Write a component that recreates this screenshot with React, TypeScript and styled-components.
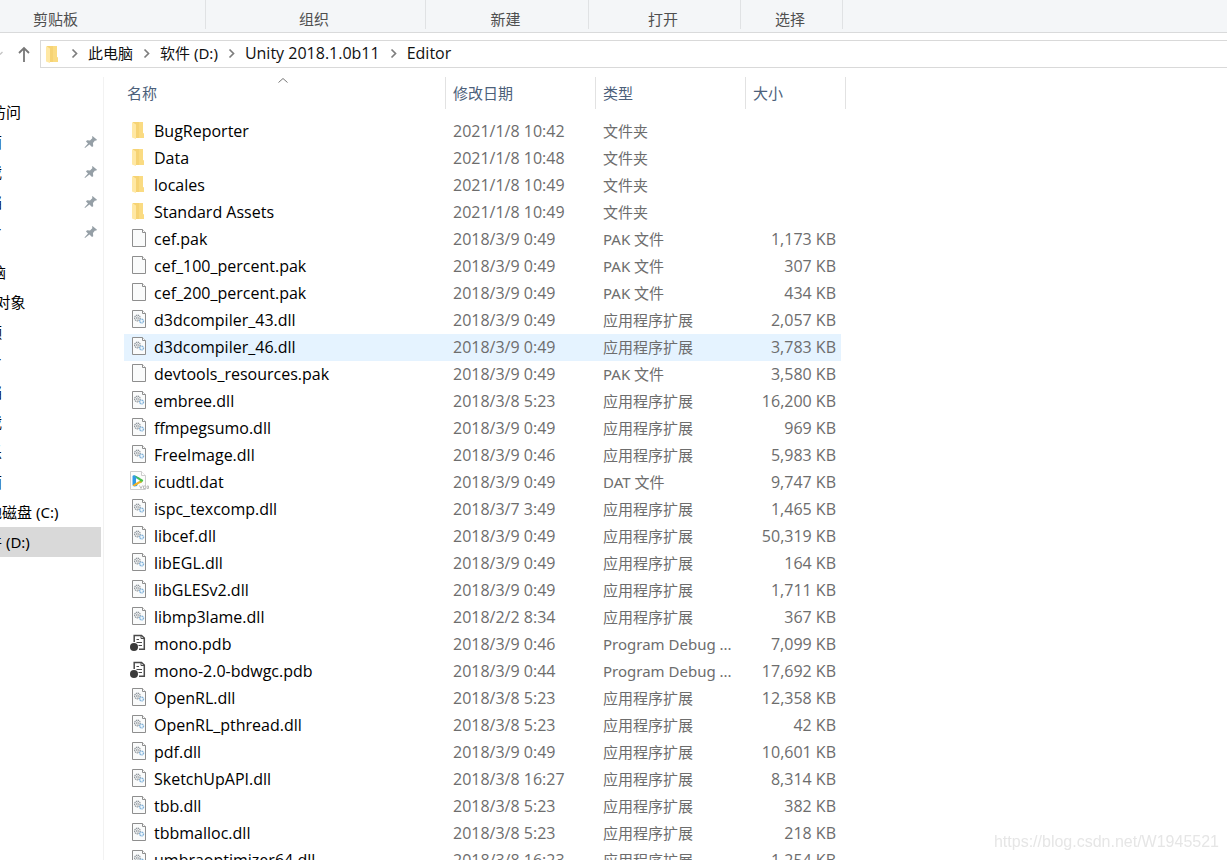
import React from "react";
import styled, { createGlobalStyle, css } from "styled-components";

const GlobalStyle = createGlobalStyle`
  * { box-sizing: border-box; }
  body {
    margin: 0;
    background: #fff;
    color: #000;
    font-family: "Noto Sans", "Noto Sans CJK SC", sans-serif;
    font-size: 15px;
    line-height: 20px;
    overflow: hidden;
  }
`;

const latinText = css`
  font-family: "Open Sans", sans-serif;
  font-size: 16px;
`;

const Window = styled.div`
  display: flex;
  flex-direction: column;
  height: 100vh;
  overflow: hidden;
`;

const Ribbon = styled.div`
  display: flex;
  height: 33px;
  padding-bottom: 3px;
  flex: none;
  background: #f4f6f8;
  border-bottom: 1px solid #d9dadb;
`;

const RibbonGroup = styled.div<{ $width: number; $cut?: number }>`
  width: ${(p) => p.$width}px;
  padding: 9px ${(p) => p.$cut ?? 3}px 0 0;
  border-right: 1px solid #e0e2e4;
  color: #4f4f4f;
  text-align: center;
`;

const AddressRow = styled.div`
  display: flex;
  align-items: center;
  flex: none;
  height: 44px;
  padding-bottom: 2px;
`;

const ToolButton = styled.button<{ $width: number; $end?: number }>`
  display: flex;
  align-items: center;
  justify-content: flex-end;
  width: ${(p) => p.$width}px;
  height: 28px;
  padding: 0 ${(p) => p.$end ?? 0}px 0 0;
  border: 0;
  background: none;
`;

const AddressBar = styled.nav`
  display: flex;
  align-items: center;
  flex: 1;
  height: 28px;
  padding-left: 3px;
  border: 1px solid #d9d9d9;
  border-right: 0;
`;

const Crumb = styled.a<{ $latin: boolean }>`
  padding-bottom: 2px;
  color: #111;
  text-decoration: none;
  white-space: nowrap;
  ${(p) => p.$latin && latinText}
`;

const Chevron = styled.svg`
  width: 9px;
  height: 12px;
  margin: 0 9px;
  flex: none;

  &:first-of-type {
    margin-left: 6px;
  }
`;

const Location = styled.span`
  display: flex;
`;

const Body = styled.div`
  display: flex;
  flex: 1;
  min-height: 0;
`;

const Sidebar = styled.nav`
  width: 104px;
  flex: none;
  padding-top: 20px;
  overflow: hidden;
  border-right: 1px solid #f2f2f2;
`;

const NavSection = styled.ul`
  list-style: none;
  margin: 0 0 10px -39px;
  padding: 0;
`;

const NavItem = styled.li<{ $level: number; $selected?: boolean }>`
  display: flex;
  align-items: center;
  justify-content: space-between;
  height: 30px;
  margin-right: 2px;
  padding: 0 3px 0 ${(p) => p.$level * 11}px;
  background: ${(p) => (p.$selected ? "#d9d9d9" : "transparent")};
`;

const NavLink = styled.a`
  color: inherit;
  text-decoration: none;
  white-space: nowrap;
`;

const Listing = styled.main`
  flex: 1;
  min-width: 0;
  padding-left: 20px;
  overflow: hidden;
`;

const FileTable = styled.table`
  width: 722px;
  table-layout: fixed;
  border-collapse: separate;
  border-spacing: 0;
`;

const HeadCell = styled.th`
  height: 41px;
  padding: 0;
  vertical-align: top;
  font-weight: 400;
`;

const HeadButton = styled.button<{ $first?: boolean }>`
  position: relative;
  display: block;
  width: 100%;
  height: 32px;
  padding: 0 0 1px ${(p) => (p.$first ? 3 : 7)}px;
  border: 0;
  border-right: 1px solid #e2e2e2;
  background: none;
  color: #4c607a;
  font: inherit;
  text-align: left;
`;

const SortMark = styled.svg`
  position: absolute;
  top: 0;
  left: 48%;
  width: 10px;
  height: 7px;
`;

const cell = css`
  height: 27px;
  padding: 0 7px 2px;
  overflow: hidden;
  white-space: nowrap;
  text-overflow: ellipsis;
`;

const Cell = styled.td`
  ${cell}
  color: #6d6d6d;
`;

const DateCell = styled(Cell)`
  ${latinText}
`;

const NameCell = styled.td`
  ${cell}
  ${latinText}
  padding: 0 6px;
`;

const SizeCell = styled(Cell)`
  ${latinText}
  padding: 0 5px 2px 0;
  border-right: 5px solid transparent;
  background-clip: padding-box;
  text-align: right;
`;

const Row = styled.tr<{ $hover: boolean }>`
  & > td {
    background-color: ${(p) => (p.$hover ? "#e5f3ff" : "transparent")};
  }
`;

const NameLine = styled.div`
  display: flex;
  align-items: center;
  gap: 4px;
  height: 27px;
  padding-bottom: 2px;
`;

const Icon = styled.svg`
  width: 20px;
  height: 20px;
  margin-bottom: 1px;
  flex: none;
`;

const Watermark = styled.div`
  position: fixed;
  right: 8px;
  bottom: 8px;
  color: #e6e6e6;
  font: 16px/20px "Liberation Sans", sans-serif;
`;

type Kind = "folder" | "page" | "dll" | "dat" | "pdb";

const FolderShape = () => (
  <>
    <path d="M3 2h10v11l1 1v4H4z" fill="#f6d374" />
    <path d="M9 2h4v11l1 1v4H9z" fill="#fadb82" />
    <path d="M2 2l4 2.500V19l-4-1.500z" fill="#ffe8a4" />
  </>
);

const PageShape = () => (
  <>
    <path d="M2.500 1.500h10l3 3v14h-13z" fill="#fafbfb" stroke="#8e8e8e" />
    <path d="M12.500 1.500v3h3" fill="#fff" stroke="#8e8e8e" />
  </>
);

const FileIcon = ({ kind }: { kind: Kind }) => (
  <Icon viewBox="0 0 20 20" aria-hidden="true">
    {kind === "folder" && <FolderShape />}
    {(kind === "page" || kind === "dll") && <PageShape />}
    {kind === "dll" && (
      <>
        <circle cx="7.400" cy="9" r="2.800" fill="none" stroke="#8d949a" strokeWidth="1.300" strokeDasharray="1.300 .6" />
        <circle cx="7.400" cy="9" r="1.100" fill="none" stroke="#8d949a" strokeWidth=".8" />
        <circle cx="11.600" cy="12" r="1.900" fill="#eef7fd" stroke="#7fb0d8" strokeWidth="1.400" strokeDasharray="1.200 .5" />
      </>
    )}
    {kind === "dat" && (
      <>
        <path d="M.5.500h11l4 4v14H.5z" fill="#fcfcfc" stroke="#cdcdcd" />
        <path d="M11.500.500v4h4" fill="#fff" stroke="#cdcdcd" />
        <path d="M2.500 5.500Q2.500 4 4.500 4.300L10 7 7 15l-2.500.5q-2 0-2-2z" fill="#2f9be6" />
        <path d="M4 4.100L12.500 8.500q1.500 1 0 2.200l-2 1.500L7 7z" fill="#4cc24a" />
        <path d="M12.500 10.700L5 15q-1.500.4-2.300-.8l5.300-3.900z" fill="#f5b324" />
        <path d="M6 7.200l4 2.300-4 2.600z" fill="#fff" />
        <path d="M9.500 14.500l1.500 3 1.500-3M15.500 15h-2v2.500h2M17 15h1.500v2.500H17z" fill="none" stroke="#bdbdbd" />
      </>
    )}
    {kind === "pdb" && (
      <>
        <path d="M4.200 9V2.500h7.300L14.300 5v11.300H9" fill="none" stroke="#4a4a4a" strokeWidth="1.500" />
        <path d="M11 2.500V5.500h3.300M6.500 6.500h2.500M6.500 9.500h5.500M8.500 12.500H12" fill="none" stroke="#4a4a4a" />
        <circle cx="4" cy="14" r="4" fill="#3b3b3b" />
      </>
    )}
  </Icon>
);

const CrumbArrow = () => (
  <Chevron viewBox="0 0 9 12" aria-hidden="true">
    <path d="M2.500 1.500L6.500 5.500 2.500 9.500" fill="none" stroke="#7d7d7d" strokeWidth="1.700" />
  </Chevron>
);

const Pin = () => (
  <svg width="14" height="14" viewBox="0 0 14 14" aria-hidden="true">
    <path d="M8.500 1l4.500 3.800-1 1-1-.3-2 2.500.2 3.200L8 12 5.500 9.500 1 13 .5 12.500 4 8.500 2 6.500l1-1.300 3 .2L8.500 3 8 2z" fill="#959fa6" />
  </svg>
);

const ribbonGroups = [
  { label: "剪贴板", width: 206, cut: 94 },
  { label: "组织", width: 220 },
  { label: "新建", width: 163 },
  { label: "打开", width: 152 },
  { label: "选择", width: 102 },
];

const crumbs = [
  { label: "此电脑", latin: false },
  { label: "软件 (D:)", latin: false },
  { label: "Unity 2018.1.0b11", latin: true },
  { label: "Editor", latin: true },
];

const pinned = ["桌面", "下载", "文档", "图片"];
const computer = ["3D 对象", "视频", "图片", "文档", "下载", "音乐", "桌面", "本地磁盘 (C:)", "软件 (D:)"];

const EXT = "应用程序扩展";

const files: [Kind, string, string, string, string][] = [
  ["folder", "BugReporter", "2021/1/8 10:42", "文件夹", ""],
  ["folder", "Data", "2021/1/8 10:48", "文件夹", ""],
  ["folder", "locales", "2021/1/8 10:49", "文件夹", ""],
  ["folder", "Standard Assets", "2021/1/8 10:49", "文件夹", ""],
  ["page", "cef.pak", "2018/3/9 0:49", "PAK 文件", "1,173 KB"],
  ["page", "cef_100_percent.pak", "2018/3/9 0:49", "PAK 文件", "307 KB"],
  ["page", "cef_200_percent.pak", "2018/3/9 0:49", "PAK 文件", "434 KB"],
  ["dll", "d3dcompiler_43.dll", "2018/3/9 0:49", EXT, "2,057 KB"],
  ["dll", "d3dcompiler_46.dll", "2018/3/9 0:49", EXT, "3,783 KB"],
  ["page", "devtools_resources.pak", "2018/3/9 0:49", "PAK 文件", "3,580 KB"],
  ["dll", "embree.dll", "2018/3/8 5:23", EXT, "16,200 KB"],
  ["dll", "ffmpegsumo.dll", "2018/3/9 0:49", EXT, "969 KB"],
  ["dll", "FreeImage.dll", "2018/3/9 0:46", EXT, "5,983 KB"],
  ["dat", "icudtl.dat", "2018/3/9 0:49", "DAT 文件", "9,747 KB"],
  ["dll", "ispc_texcomp.dll", "2018/3/7 3:49", EXT, "1,465 KB"],
  ["dll", "libcef.dll", "2018/3/9 0:49", EXT, "50,319 KB"],
  ["dll", "libEGL.dll", "2018/3/9 0:49", EXT, "164 KB"],
  ["dll", "libGLESv2.dll", "2018/3/9 0:49", EXT, "1,711 KB"],
  ["dll", "libmp3lame.dll", "2018/2/2 8:34", EXT, "367 KB"],
  ["pdb", "mono.pdb", "2018/3/9 0:46", "Program Debug ...", "7,099 KB"],
  ["pdb", "mono-2.0-bdwgc.pdb", "2018/3/9 0:44", "Program Debug ...", "17,692 KB"],
  ["dll", "OpenRL.dll", "2018/3/8 5:23", EXT, "12,358 KB"],
  ["dll", "OpenRL_pthread.dll", "2018/3/8 5:23", EXT, "42 KB"],
  ["dll", "pdf.dll", "2018/3/9 0:49", EXT, "10,601 KB"],
  ["dll", "SketchUpAPI.dll", "2018/3/8 16:27", EXT, "8,314 KB"],
  ["dll", "tbb.dll", "2018/3/8 5:23", EXT, "382 KB"],
  ["dll", "tbbmalloc.dll", "2018/3/8 5:23", EXT, "218 KB"],
  ["dll", "umbraoptimizer64.dll", "2018/3/8 16:23", EXT, "1,254 KB"],
];

export default function App() {
  return (
    <Window>
      <GlobalStyle />
      <Ribbon>
        {ribbonGroups.map((g) => (
          <RibbonGroup key={g.label} $width={g.width} $cut={g.cut}>{g.label}</RibbonGroup>
        ))}
      </Ribbon>
      <AddressRow>
        <ToolButton type="button" aria-label="最近浏览的位置" $width={3}>
          <svg width="3" height="6" viewBox="0 0 3 6" aria-hidden="true">
            <path d="M0 3.500L2.500 1" fill="none" stroke="#c4c4c4" strokeWidth="1.300" />
          </svg>
        </ToolButton>
        <ToolButton type="button" aria-label="向上" $width={37} $end={9}>
          <svg width="14" height="18" viewBox="0 0 14 18" aria-hidden="true">
            <path d="M7 17V3M2 8l5-5 5 5" fill="none" stroke="#777" strokeWidth="1.800" />
          </svg>
        </ToolButton>
        <AddressBar aria-label="地址">
          <Location>
            <Icon viewBox="0 0 20 20" aria-hidden="true"><FolderShape /></Icon>
          </Location>
          {crumbs.map((c) => (
            <React.Fragment key={c.label}>
              <CrumbArrow />
              <Crumb href="#" $latin={c.latin}>{c.label}</Crumb>
            </React.Fragment>
          ))}
        </AddressBar>
      </AddressRow>
      <Body>
        <Sidebar>
          <NavSection>
            <NavItem $level={0}><NavLink href="#">快速访问</NavLink></NavItem>
            {pinned.map((n) => (
              <NavItem key={n} $level={1}>
                <NavLink href="#">{n}</NavLink>
                <Pin />
              </NavItem>
            ))}
          </NavSection>
          <NavSection>
            <NavItem $level={0}><NavLink href="#">此电脑</NavLink></NavItem>
            {computer.map((n) => (
              <NavItem key={n} $level={1} $selected={n === "软件 (D:)"}>
                <NavLink href="#">{n}</NavLink>
              </NavItem>
            ))}
          </NavSection>
        </Sidebar>
        <Listing>
          <FileTable>
            <colgroup>
              <col width="322" />
              <col width="150" />
              <col width="150" />
              <col width="100" />
            </colgroup>
            <thead>
              <tr>
                <HeadCell>
                  <HeadButton type="button" $first>
                    名称
                    <SortMark viewBox="0 0 10 7" aria-hidden="true">
                      <path d="M.5 5.500L5 1.500l4.500 4" fill="none" stroke="#777" />
                    </SortMark>
                  </HeadButton>
                </HeadCell>
                <HeadCell><HeadButton type="button">修改日期</HeadButton></HeadCell>
                <HeadCell><HeadButton type="button">类型</HeadButton></HeadCell>
                <HeadCell><HeadButton type="button">大小</HeadButton></HeadCell>
              </tr>
            </thead>
            <tbody>
              {files.map(([kind, name, date, type, size]) => (
                <Row key={name} $hover={name === "d3dcompiler_46.dll"}>
                  <NameCell>
                    <NameLine>
                      <FileIcon kind={kind} />
                      {name}
                    </NameLine>
                  </NameCell>
                  <DateCell>{date}</DateCell>
                  <Cell>{type}</Cell>
                  <SizeCell>{size}</SizeCell>
                </Row>
              ))}
            </tbody>
          </FileTable>
        </Listing>
      </Body>
      <Watermark>https://blog.csdn.net/W1945521</Watermark>
    </Window>
  );
}
